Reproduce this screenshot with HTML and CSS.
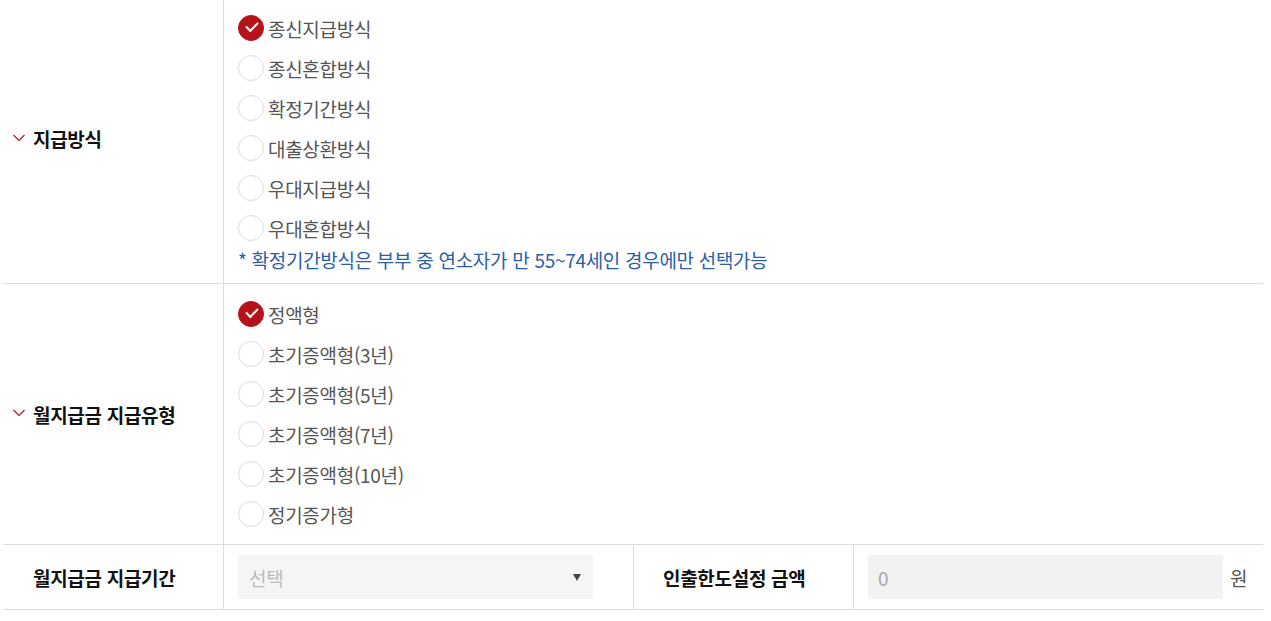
FILE: index.html
```html
<!DOCTYPE html>
<html lang="ko">
<head>
<meta charset="utf-8">
<link rel="stylesheet" href="styles.css">
</head>
<body>
<div class="form">
  <div class="row row-first">
    <div class="label label-shift"><svg class="chev" width="12" height="8" viewBox="0 0 12 8"><polyline points="0.5,1 6,6.5 11.5,1" fill="none" stroke="#b5121b" stroke-width="1.1"/></svg>지급방식</div>
    <div class="value">
      <ul class="radios">
        <li class="radio checked"><span class="dot"></span>종신지급방식</li>
        <li class="radio"><span class="dot"></span>종신혼합방식</li>
        <li class="radio"><span class="dot"></span>확정기간방식</li>
        <li class="radio"><span class="dot"></span>대출상환방식</li>
        <li class="radio"><span class="dot"></span>우대지급방식</li>
        <li class="radio"><span class="dot"></span>우대혼합방식</li>
      </ul>
      <p class="note">* 확정기간방식은 부부 중 연소자가 만 55~74세인 경우에만 선택가능</p>
    </div>
  </div>
  <div class="row row-second">
    <div class="label"><svg class="chev" width="12" height="8" viewBox="0 0 12 8"><polyline points="0.5,1 6,6.5 11.5,1" fill="none" stroke="#b5121b" stroke-width="1.1"/></svg>월지급금 지급유형</div>
    <div class="value">
      <ul class="radios">
        <li class="radio checked"><span class="dot"></span>정액형</li>
        <li class="radio"><span class="dot"></span>초기증액형(3년)</li>
        <li class="radio"><span class="dot"></span>초기증액형(5년)</li>
        <li class="radio"><span class="dot"></span>초기증액형(7년)</li>
        <li class="radio"><span class="dot"></span>초기증액형(10년)</li>
        <li class="radio"><span class="dot"></span>정기증가형</li>
      </ul>
    </div>
  </div>
  <div class="row row-third">
    <div class="label">월지급금 지급기간</div>
    <div class="value value-half">
      <div class="select"><span>선택</span><span class="arrow"></span></div>
    </div>
    <div class="label label-mid">인출한도설정 금액</div>
    <div class="value value-rest">
      <div class="input">0</div><span class="unit">원</span>
    </div>
  </div>
</div>
</body>
</html>
```
FILE: styles.css
```css
* { box-sizing: border-box; }
html, body { margin: 0; padding: 0; background: #fff; }
body {
  font-family: "Noto Sans CJK KR", "Noto Sans", sans-serif;
  color: #555;
}
.form {
  width: 1260px;
  margin-left: 3px;
}
.row {
  display: flex;
  border-bottom: 1px solid #ddd;
}
.label {
  width: 221px;
  flex: none;
  display: flex;
  align-items: center;
  padding-left: 30px;
  font-size: 19px;
  font-weight: 700;
  color: #111;
  letter-spacing: -0.3px;
  position: relative;
  border-right: 1px solid #ddd;
}
.label-mid { width: 220px; padding-left: 29px; }
.label-shift { padding-bottom: 6px; }
.chev {
  position: absolute;
  left: 10px;
  top: 50%;
  margin-top: -5px;
}
.label-shift .chev { margin-top: -8px; }
.value {
  flex: 1;
  padding: 10px 14px 10px 14px;
}
.row-first .value { padding-top: 8px; padding-bottom: 11px; }
.radios { list-style: none; margin: 0; padding: 0; }
.radio {
  height: 40px;
  display: flex;
  align-items: center;
  gap: 4px;
  font-size: 19px;
  letter-spacing: -0.3px;
  color: #555;
}
.dot {
  width: 26px;
  height: 26px;
  border-radius: 50%;
  border: 1px solid #ddd;
  background: #fff;
  flex: none;
  position: relative;
}
.checked .dot {
  background: #b5121b;
  border-color: #b5121b;
}
.checked .dot::after {
  content: "";
  position: absolute;
  left: 7px;
  top: 6px;
  width: 10px;
  height: 5px;
  border-left: 2px solid #fff;
  border-bottom: 2px solid #fff;
  transform: rotate(-45deg);
}
.note {
  margin: 0;
  height: 24px;
  line-height: 24px;
  font-size: 19px;
  letter-spacing: -0.3px;
  color: #2b5ea8;
}
.row-third { height: 65px; }
.value-half {
  flex: none;
  width: 410px;
  display: flex;
  align-items: center;
  padding: 0 0 0 14px;
  border-right: 1px solid #ddd;
}
.value-rest {
  flex: 1;
  display: flex;
  align-items: center;
  padding: 0 0 0 14px;
}
.select {
  width: 355px;
  height: 44px;
  background: #f5f5f5;
  display: flex;
  align-items: center;
  justify-content: space-between;
  padding: 0 12px 0 11px;
  font-size: 19px;
  color: #bbb;
  letter-spacing: -0.3px;
}
.arrow {
  width: 0;
  height: 0;
  border-left: 4px solid transparent;
  border-right: 4px solid transparent;
  border-top: 7px solid #444;
}
.input {
  width: 355px;
  height: 44px;
  background: #f2f2f2;
  display: flex;
  align-items: center;
  padding-left: 10px;
  font-size: 19px;
  color: #aaa;
}
.unit {
  margin-left: 7px;
  font-size: 19px;
  color: #555;
}
```
